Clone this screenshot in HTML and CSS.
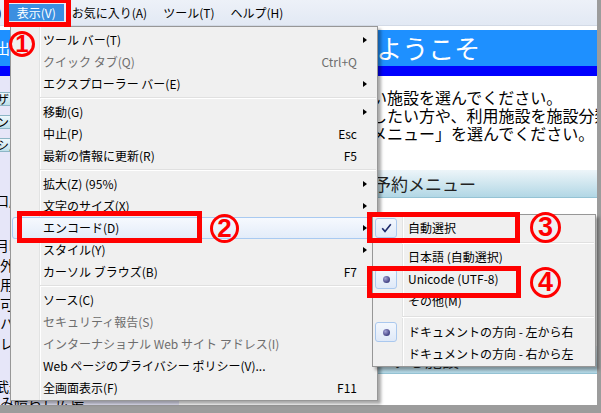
FILE: index.html
```html
<!DOCTYPE html>
<html lang="ja">
<head>
<meta charset="utf-8">
<title>表示メニュー</title>
<link rel="stylesheet" href="styles.css">
</head>
<body>
<div class="window">
  <div class="menubar">
    <span class="mb-item mb-cut">ファイル(F)</span>
    <span class="mb-item active">表示(V)</span>
    <span class="mb-item">お気に入り(A)</span>
    <span class="mb-item">ツール(T)</span>
    <span class="mb-item">ヘルプ(H)</span>
  </div>
  <div class="page">
    <div class="hd hd-side">出張所のご案内</div>
    <div class="hd hd-main">予約システムへようこそ</div>
    <div class="band"></div>
    <aside class="side">
      <div class="sbtn">ザ・ホール</div>
      <div class="sbtn">ンテナンス情報</div>
      <div class="sbtn">シ民プール</div>
      <p class="stext a">口座振替のご案内</p>
      <p class="stext b">月曜日は休館日です<br>外部リンク集<br>用具の貸出について<br>可燃ごみの分別<br>ハンドボール場<br>レストラン</p>
      <p class="stext c">武道館<br>み晴らし広場</p>
    </aside>
    <main class="main">
      <p class="intro">ご予約の方は、利用したい施設を選んでください。<br>各施設の空き状況を確認したい方や、利用施設を施設分類から探す方は<br>下記の「利用施設の予約メニュー」を選んでください。</p>
      <div class="sec-bar first">施設予約メニュー</div>
      <div class="sec-bar second">エントリーする施設</div>
    </main>
  </div>
</div>

<div class="menu view-menu">
  <div class="mi sub"><span class="lbl">ツール バー(T)</span><span class="key"></span><span class="arr"></span></div>
  <div class="mi dis"><span class="lbl">クイック タブ(Q)</span><span class="key">Ctrl+Q</span><span></span></div>
  <div class="mi sub"><span class="lbl">エクスプローラー バー(E)</span><span class="key"></span><span class="arr"></span></div>
  <div class="sep"></div>
  <div class="mi sub"><span class="lbl">移動(G)</span><span class="key"></span><span class="arr"></span></div>
  <div class="mi"><span class="lbl">中止(P)</span><span class="key">Esc</span><span></span></div>
  <div class="mi"><span class="lbl">最新の情報に更新(R)</span><span class="key">F5</span><span></span></div>
  <div class="sep"></div>
  <div class="mi sub"><span class="lbl">拡大(Z) (95%)</span><span class="key"></span><span class="arr"></span></div>
  <div class="mi sub"><span class="lbl">文字のサイズ(X)</span><span class="key"></span><span class="arr"></span></div>
  <div class="mi sub hot"><span class="lbl">エンコード(D)</span><span class="key"></span><span class="arr"></span></div>
  <div class="mi sub"><span class="lbl">スタイル(Y)</span><span class="key"></span><span class="arr"></span></div>
  <div class="mi"><span class="lbl">カーソル ブラウズ(B)</span><span class="key">F7</span><span></span></div>
  <div class="sep"></div>
  <div class="mi"><span class="lbl">ソース(C)</span><span class="key"></span><span></span></div>
  <div class="mi dis"><span class="lbl">セキュリティ報告(S)</span><span class="key"></span><span></span></div>
  <div class="mi dis"><span class="lbl">インターナショナル Web サイト アドレス(I)</span><span class="key"></span><span></span></div>
  <div class="mi"><span class="lbl">Web ページのプライバシー ポリシー(V)...</span><span class="key"></span><span></span></div>
  <div class="mi"><span class="lbl">全画面表示(F)</span><span class="key">F11</span><span></span></div>
</div>

<div class="menu enc-menu">
  <div class="si"><span class="ibox"><svg class="check" width="11" height="10" viewBox="0 0 11 10"><path d="M1.2 5.2 L4 8.4 L9.8 1.2" fill="none" stroke="#1d2a6b" stroke-width="1.6"/></svg></span><span class="slbl">自動選択</span></div>
  <div class="ssep s1"></div>
  <div class="si"><span></span><span class="slbl">日本語 (自動選択)</span></div>
  <div class="si"><span class="ibox"><span class="dot"></span></span><span class="slbl">Unicode (UTF-8)</span></div>
  <div class="si"><span></span><span class="slbl">その他(M)</span></div>
  <div class="ssep s2"></div>
  <div class="si"><span class="ibox"><span class="dot"></span></span><span class="slbl">ドキュメントの方向 - 左から右</span></div>
  <div class="si"><span></span><span class="slbl">ドキュメントの方向 - 右から左</span></div>
</div>

<div class="anno b1"></div>
<div class="anno b2"></div>
<div class="anno b3"></div>
<div class="anno b4"></div>
<div class="num n1">1</div>
<div class="num n2">2</div>
<div class="num n3">3</div>
<div class="num n4">4</div>
</body>
</html>
```

FILE: styles.css
```css
* { box-sizing: border-box; }
html, body { margin: 0; padding: 0; }
body {
  width: 601px;
  height: 413px;
  overflow: hidden;
  position: relative;
  background: #9c9c9c;
  font-family: "Noto Sans CJK JP", sans-serif;
}

.window {
  width: 597px;
  height: 405px;
  background: #fff;
  display: flex;
  flex-direction: column;
  overflow: hidden;
}

/* menu bar */
.menubar {
  flex: none;
  height: 26px;
  padding-top: 4px;
  display: flex;
  align-items: flex-start;
  background: linear-gradient(#edf1f8, #e2e9f4);
  border-bottom: 1px solid #d3dae6;
  font-size: 12px;
  white-space: nowrap;
  overflow: hidden;
}
.mb-item {
  height: 17px;
  line-height: 17px;
  padding: 0 8px;
  color: #000;
}
.mb-cut { margin-left: -61px; padding: 0 7px 0 0; }
.mb-item.active { background: #3b8fe0; color: #fff; }

/* page under the menus */
.page {
  flex: 1;
  display: grid;
  grid-template-columns: 179px 1fr;
  grid-template-rows: 36px 10px 1fr;
  padding-top: 4px;
  min-height: 0;
}
.hd {
  background: #1e90ff;
  color: #fff;
  font-size: 26px;
  line-height: 36px;
  white-space: nowrap;
  overflow: hidden;
}
.hd-side { font-size: 15px; text-indent: -5px; }
.hd-main { padding-left: 16px; }
.band { grid-column: 1 / -1; background: #0000ff; }

.side {
  background: #e6e6f8;
  padding-top: 16px;
  overflow: hidden;
}
.sbtn {
  width: 170px;
  height: 14px;
  margin: 0 0 9px -3px;
  border: 1px solid #8db6c6;
  background: linear-gradient(#eef8fb, #bfe0ea);
  font-size: 12px;
  line-height: 12px;
  text-indent: -1px;
  white-space: nowrap;
  overflow: hidden;
}
.stext {
  margin: 0;
  font-size: 14px;
  white-space: nowrap;
  text-indent: -5px;
  color: #000;
}
.stext.a { margin-top: 39px; line-height: 19px; }
.stext.b { margin-top: 26px; line-height: 19.5px; }
.stext.c { margin-top: 25px; line-height: 16px; }

.main { overflow: hidden; }
.intro {
  margin: 12px 0 0;
  padding-left: 16px;
  font-size: 16px;
  line-height: 18px;
  white-space: nowrap;
  color: #000;
}
.sec-bar {
  height: 28px;
  font-size: 17px;
  line-height: 28px;
  white-space: nowrap;
  color: #222;
  background: linear-gradient(#edf5f9, #b2d7e5);
  border-bottom: 1px solid #95c3d4;
}
.sec-bar.first { margin-top: 28px; padding-left: 161px; }
.sec-bar.second { margin-top: 148px; padding-left: 127px; }

/* drop-down menus */
.menu {
  position: absolute;
  border: 1px solid #979797;
  padding: 2px 0 1px;
  font-size: 12px;
  color: #000;
  box-shadow: 3px 3px 3px rgba(0, 0, 0, 0.35);
  white-space: nowrap;
}
.view-menu {
  left: 10px;
  top: 26px;
  width: 368px;
  background: linear-gradient(90deg, #f0f0f0 28px, #e2e3e3 28px 29px, #fff 29px 30px, #f0f0f0 30px);
}
.mi {
  display: grid;
  grid-template-columns: 1fr auto 11px;
  align-items: center;
  height: 22px;
  margin: 0 2px 0 1px;
  padding-left: 30px;
  border: 1px solid transparent;
  border-radius: 3px;
  line-height: 20px;
}
.mi .key { margin-right: 6px; }
.mi.dis { color: #6d6d6d; }
.mi.sub .arr {
  width: 0;
  height: 0;
  border-left: 4px solid #000;
  border-top: 3.5px solid transparent;
  border-bottom: 3.5px solid transparent;
}
.mi.hot {
  border-color: #a9caf1;
  background: linear-gradient(#f6f9fe, #e3ecf9);
}
.sep {
  height: 6px;
  margin: 0 1px 0 29px;
  background: linear-gradient(transparent 2px, #e0e0e0 2px 3px, #fff 3px 4px, transparent 4px);
}

.enc-menu {
  left: 372px;
  top: 214px;
  width: 224px;
  background: linear-gradient(90deg, #f0f0f0 29px, #e2e3e3 29px 30px, #fff 30px 31px, #f0f0f0 31px);
}
.si {
  display: grid;
  grid-template-columns: 24px 1fr;
  align-items: center;
  height: 22px;
  margin: 0 2px 0 1px;
}
.slbl { padding-left: 10px; line-height: 20px; }
.ibox {
  width: 22px;
  height: 20px;
  margin-left: 1px;
  border: 1px solid #aac8ee;
  border-radius: 3px;
  background: linear-gradient(#f3f7fd, #dfe9f8);
  display: flex;
  align-items: center;
  justify-content: center;
}
.dot {
  width: 7px;
  height: 7px;
  border-radius: 50%;
  background: radial-gradient(circle at 35% 35%, #a3a3d6, #3b3b7e 75%);
}
.ssep {
  margin: 0 1px 0 29px;
  background: linear-gradient(transparent 3px, #e0e0e0 3px 4px, #fff 4px 5px, transparent 5px);
}
.ssep.s1 { height: 7px; }
.ssep.s2 { height: 9px; background: linear-gradient(transparent 4px, #e0e0e0 4px 5px, #fff 5px 6px, transparent 6px); }

/* annotations */
.anno {
  position: absolute;
  border: 5px solid #ff0000;
}
.b1 { left: 4px; top: -2px; width: 67px; height: 29px; }
.b2 { left: 17px; top: 211px; width: 185px; height: 32px; }
.b3 { left: 367px; top: 212px; width: 153px; height: 31px; }
.b4 { left: 367px; top: 266px; width: 154px; height: 32px; }

.num {
  position: absolute;
  border: 3px solid #ff0000;
  border-radius: 50%;
  color: #ff0000;
  font-family: "Liberation Sans", sans-serif;
  font-weight: bold;
  text-align: center;
}
.n1 { left: 9px; top: 31px; width: 26px; height: 26px; font-size: 24px; line-height: 20px; }
.n2 { left: 210px; top: 214px; width: 29px; height: 29px; font-size: 26px; line-height: 23px; }
.n3 { left: 530px; top: 212px; width: 31px; height: 31px; font-size: 27px; line-height: 25px; }
.n4 { left: 530px; top: 267px; width: 31px; height: 31px; font-size: 27px; line-height: 25px; }
```
